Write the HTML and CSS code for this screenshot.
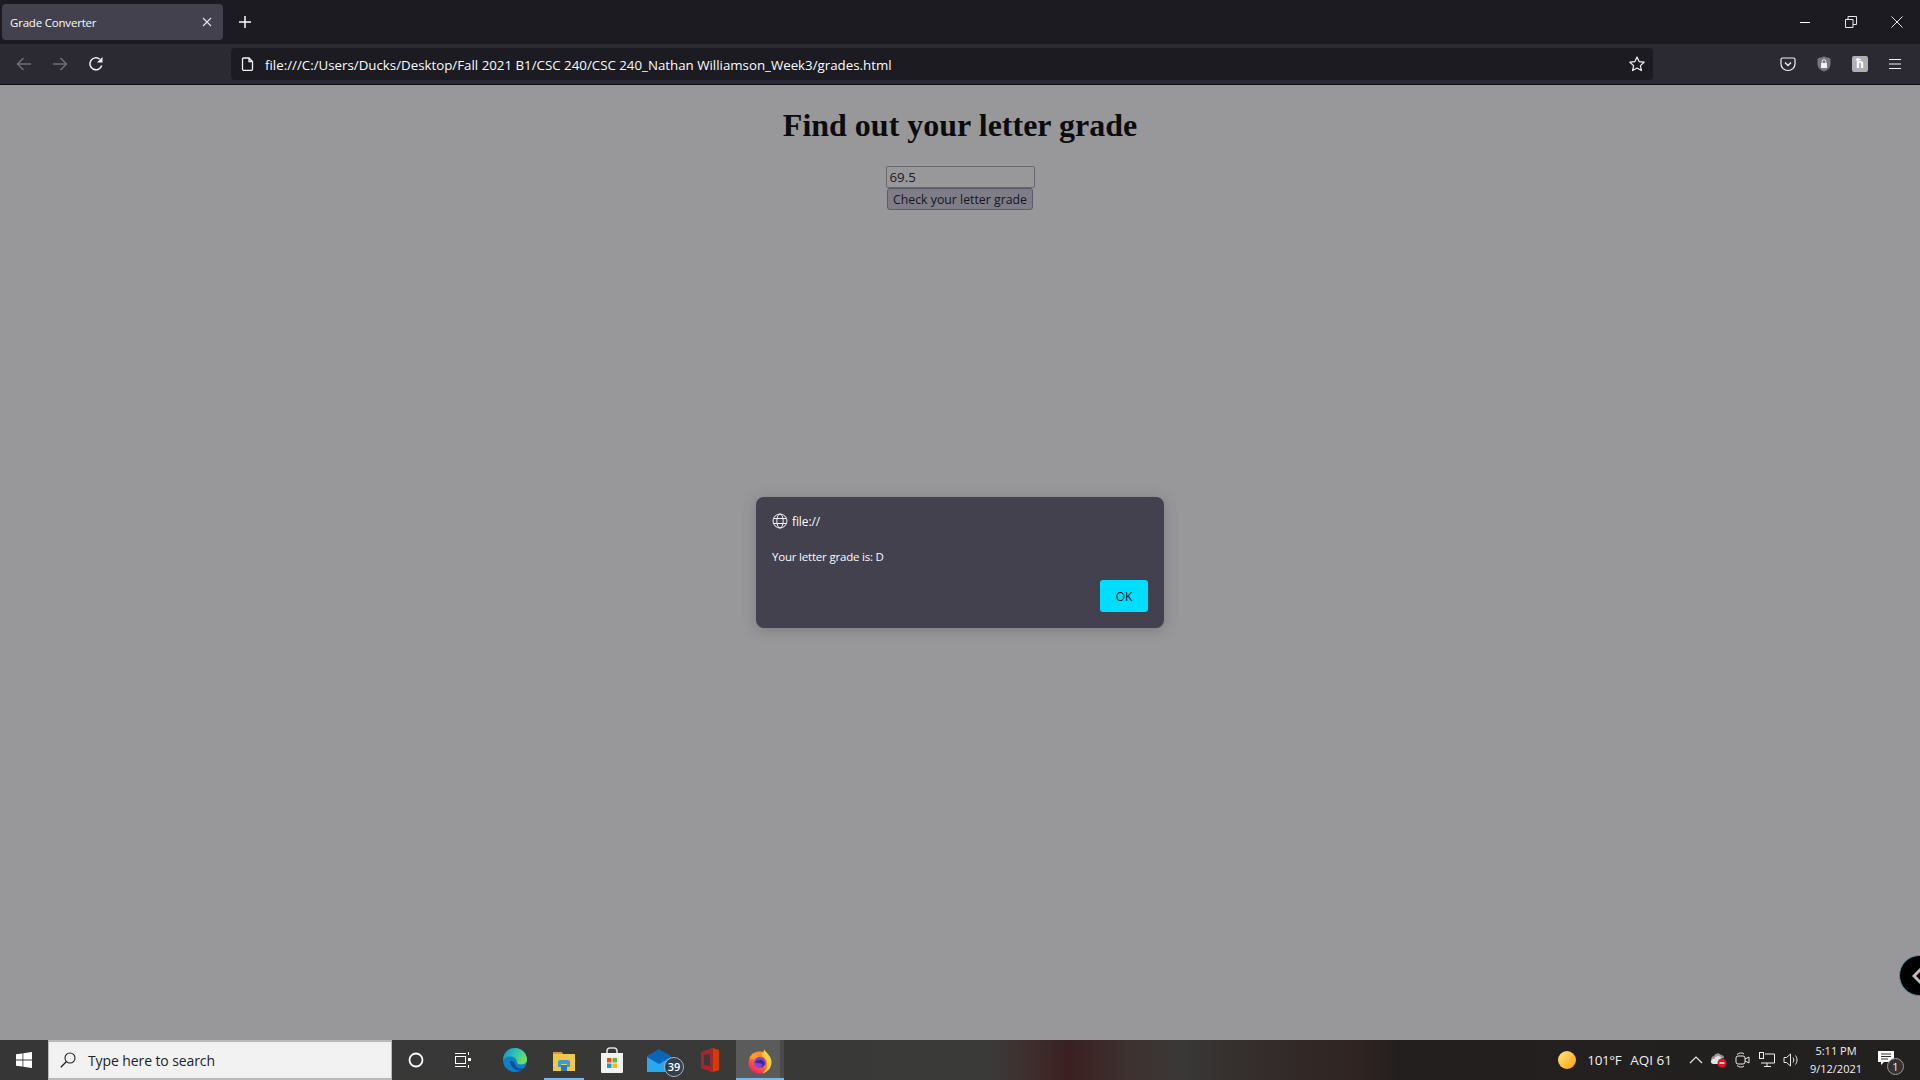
FILE: index.html
```html
<!DOCTYPE html>
<html lang="en">
<head>
<meta charset="utf-8">
<title>Grade Converter</title>
<link rel="stylesheet" href="styles.css">
</head>
<body>
<div class="app">
  <header class="tabbar">
    <div class="tab">
      <span class="tab-title">Grade Converter</span>
      <svg class="tab-close" width="10" height="10" viewBox="0 0 10 10"><path d="M1 1l8 8M9 1l-8 8" stroke="#e6e6e8" stroke-width="1.1" fill="none"/></svg>
    </div>
    <svg class="newtab" width="14" height="14" viewBox="0 0 14 14"><path d="M7 1v12M1 7h12" stroke="#fbfbfe" stroke-width="1.5" fill="none"/></svg>
    <div class="win-controls">
      <svg width="12" height="12" viewBox="0 0 12 12"><path d="M1 6.500h10" stroke="#fff" stroke-width="1"/></svg>
      <svg width="12" height="12" viewBox="0 0 12 12"><path d="M.5 3.500h7.500v8h-7.500zM3 3.500V.5h8.500v8H8" stroke="#e8e8e8" fill="none"/></svg>
      <svg width="12" height="12" viewBox="0 0 12 12"><path d="M.5.5l11 11M11.500.5l-11 11" stroke="#e8e8e8" fill="none"/></svg>
    </div>
  </header>
  <nav class="toolbar">
    <div class="nav-buttons">
      <svg width="16" height="16" viewBox="0 0 16 16"><path d="M15 8H1.500M7.500 2l-6 6 6 6" stroke="#6f6f76" stroke-width="1.500" fill="none"/></svg>
      <svg width="16" height="16" viewBox="0 0 16 16"><path d="M1 8h13.500M8.500 2l6 6-6 6" stroke="#6f6f76" stroke-width="1.500" fill="none"/></svg>
      <svg width="16" height="16" viewBox="0 0 16 16"><path d="M13.700 9.500A6 6 0 1 1 11.800 3.200" stroke="#f2f2f4" stroke-width="1.500" fill="none"/><path d="M14.500 1v5.500H9z" fill="#f2f2f4"/></svg>
    </div>
    <div class="urlbar">
      <svg class="page-icon" width="14" height="14" viewBox="0 0 14 14"><path d="M2.500 1h5.500l3.500 3.500V12a1.500 1.500 0 0 1-1.500 1.500H3a1.500 1.500 0 0 1-1.500-1.500V2A1 1 0 0 1 2.500 1zM8 1v3.500h3.500" stroke="#f2f2f4" stroke-width="1.300" fill="none"/></svg>
      <span class="url">file:///C:/Users/Ducks/Desktop/Fall 2021 B1/CSC 240/CSC 240_Nathan Williamson_Week3/grades.html</span>
      <svg width="16" height="16" viewBox="0 0 16 16"><path d="M8 1l2.100 4.600 5 .6-3.700 3.400 1 5L8 12.100 3.600 14.600l1-5L.9 6.200l5-.6z" stroke="#f2f2f4" stroke-width="1.200" stroke-linejoin="round" fill="none"/></svg>
    </div>
    <div class="toolbar-icons">
      <svg width="16" height="16" viewBox="0 0 16 16"><path d="M2.500 2h11A1.500 1.500 0 0 1 15 3.500V8a7 6.500 0 0 1-14 0V3.500A1.500 1.500 0 0 1 2.500 2z" stroke="#f2f2f4" stroke-width="1.200" fill="none"/><path d="M5 6.500l3 3 3-3" stroke="#f2f2f4" stroke-width="1.300" fill="none"/></svg>
      <svg width="16" height="16" viewBox="0 0 16 16"><path d="M8 .5l6.500 2V8c0 3.500-3 6.500-6.500 7.500C4.500 14.500 1.500 11.500 1.500 8V2.500z" fill="#77777c"/><rect x="5" y="7" width="6" height="5" rx=".5" fill="#f2f2f4"/><path d="M6.200 7V5.500a1.800 1.800 0 0 1 3.600 0V7" stroke="#f2f2f4" fill="none"/></svg>
      <div class="ext-badge">ħ</div>
      <svg width="14" height="12" viewBox="0 0 14 12"><path d="M1 1.500h12M1 6h12M1 10.500h12" stroke="#f2f2f4" stroke-width="1.200"/></svg>
    </div>
  </nav>
  <main class="page">
    <h1 class="page-title">Find out your letter grade</h1>
    <div class="grade-form">
      <input class="grade-input" type="text" value="69.5">
      <button class="grade-button" type="button">Check your letter grade</button>
    </div>
    <div class="dialog-layer">
      <div class="dialog">
        <div class="dialog-origin">
          <svg width="16" height="16" viewBox="0 0 16 16"><g stroke="#f0f0f2" stroke-width="1" fill="none"><circle cx="8" cy="8" r="7"/><ellipse cx="8" cy="8" rx="3.200" ry="7"/><path d="M1.500 5.500h13M1.500 10.500h13"/></g></svg>
          <span>file://</span>
        </div>
        <p class="dialog-message">Your letter grade is: D</p>
        <div class="dialog-actions"><button class="dialog-ok" type="button">OK</button></div>
      </div>
    </div>
    <div class="float-handle">
      <svg width="10" height="20" viewBox="0 0 10 20"><path d="M9 3L2 10l7 7" stroke="#bdbdbd" stroke-width="3" fill="none"/></svg>
    </div>
  </main>
  <footer class="taskbar">
    <div class="start">
      <svg width="16" height="16" viewBox="0 0 16 16"><path d="M0 2.300l6.500-.9v6.200H0zM7.300 1.300L16 0v7.600H7.300zM0 8.400h6.500v6.200L0 13.700zM7.300 8.400H16V16l-8.700-1.300z" fill="#fff"/></svg>
    </div>
    <div class="searchbox">
      <svg width="16" height="16" viewBox="0 0 16 16"><circle cx="10" cy="6" r="5" stroke="#222" stroke-width="1.100" fill="none"/><path d="M6.500 9.500L.8 15.200" stroke="#222" stroke-width="1.300"/></svg>
      <span>Type here to search</span>
    </div>
    <div class="task-icons">
      <div class="task-item"><svg width="16" height="16" viewBox="0 0 16 16"><circle cx="8" cy="8" r="6.500" stroke="#fff" stroke-width="1.800" fill="none"/></svg></div>
      <div class="task-item"><svg width="18" height="16" viewBox="0 0 18 16"><g stroke="#fff" fill="none"><path d="M0 1.500h11M0 14.500h11"/><rect x=".5" y="4.500" width="10" height="7"/><path d="M13.500 0v3M13.500 13v3"/></g><rect x="13" y="6" width="3" height="3" fill="#fff"/></svg></div>
      <div class="task-item app-first"><svg width="24" height="24" viewBox="0 0 24 24"><defs><linearGradient id="edgetop" x1="0" y1="0" x2="1" y2=".4"><stop offset="0" stop-color="#138ec9"/><stop offset=".55" stop-color="#2cc3b2"/><stop offset="1" stop-color="#6fe05e"/></linearGradient></defs><circle cx="12" cy="12" r="12" fill="#0f7fc8"/><path d="M12 0a12 12 0 0 1 12 12c0 3-3 4.500-6 4.500-3 0-4-1-4-2.500 0-3-3-5.500-6.500-5.500C4 8.500 1 10 .2 12.500 .2 5 5.500 0 12 0z" fill="url(#edgetop)"/><path d="M7 13c0 5 4 9 9 9.500 3 .2 5-1 6-3-3 1.500-9 1.500-10-3.500-.5-2-2-3.500-5-3z" fill="#0b4f9e"/></svg></div>
      <div class="task-item active"><svg width="22" height="20" viewBox="0 0 22 20"><path d="M0 1h8l2 2h12v17H0z" fill="#f0c84c"/><path d="M0 1h8l2 2H0z" fill="#d69e22"/><path d="M5 16v-5a2 2 0 0 1 2-2h8a2 2 0 0 1 2 2v5h-3v-3H8v3z" fill="#3f9ad8"/><rect x="8" y="14" width="6" height="6" fill="#2b7cbf"/></svg></div>
      <div class="task-item"><svg width="24" height="26" viewBox="0 0 24 26"><path d="M7 8V4a3 3 0 0 1 3-3h4a3 3 0 0 1 3 3v4" stroke="#ddd" stroke-width="1.600" fill="none"/><path d="M1 6h22v19a1 1 0 0 1-1 1H2a1 1 0 0 1-1-1z" fill="#f2f2f2"/><rect x="7" y="11" width="4.500" height="4.500" fill="#e8501f"/><rect x="12.500" y="11" width="4.500" height="4.500" fill="#6fb52c"/><rect x="7" y="16.500" width="4.500" height="4.500" fill="#0d9ee6"/><rect x="12.500" y="16.500" width="4.500" height="4.500" fill="#f8b818"/></svg></div>
      <div class="task-item"><svg class="mail-icon" width="24" height="23" viewBox="0 0 24 23"><path d="M0 7L12 0l12 7v16H0z" fill="#0a64b8"/><path d="M0 8l12 7 12-7v15H0z" fill="#2aa8ee"/></svg><span class="mail-badge">39</span></div>
      <div class="task-item"><svg class="office-icon" width="18" height="24" viewBox="0 0 18 24"><path d="M0 4.500L12 0l6 2v20l-6 2-12-4z" fill="#d83b01"/><path d="M0 4.500L12 0v24L0 20z" fill="#a4262c"/><path d="M3 7l6-1v12l-6-1z" fill="#3a3a3a"/></svg></div>
      <div class="task-item active current"><svg width="24" height="25" viewBox="0 0 24 25"><defs><linearGradient id="foxbase" x1=".9" y1="0" x2=".2" y2="1"><stop offset="0" stop-color="#ffb22e"/><stop offset=".55" stop-color="#ff6a2e"/><stop offset="1" stop-color="#f2186f"/></linearGradient></defs><circle cx="11.500" cy="13.500" r="11" fill="url(#foxbase)"/><path d="M16 0c1 3 7 6 7.500 12.500.4 6-4 11-9.500 12 5-3 6.500-9 4-14-1-2-3-2.500-4-4 1-2 2-4 2-6.500z" fill="#ffd03a"/><path d="M1.500 9C3 5.500 6 3.500 8 4c0 2 1.500 3 4 3.500-2 1-4 1.500-5.500 3-2-.5-3.500 0-5 -1.500z" fill="#ff9a2e"/><circle cx="12" cy="13.500" r="5.800" fill="#7b46d6"/><path d="M7 13c2.500-3 8-3 9.500.5.700 2.500-1.500 4.500-4 4.300 2-.6 2-2.800.3-3.300-2.300-.6-4.800 0-5.800-1.500z" fill="#3d2b96"/></svg></div>
    </div>
    <div class="tray">
      <svg class="sun" width="18" height="18" viewBox="0 0 18 18"><defs><linearGradient id="sungrad" x1="0" y1="0" x2="1" y2="1"><stop offset="0" stop-color="#ffe680"/><stop offset="1" stop-color="#ff9f0a"/></linearGradient></defs><circle cx="9" cy="9" r="9" fill="url(#sungrad)"/></svg>
      <span class="weather temp">101°F</span>
      <span class="weather aqi">AQI 61</span>
      <svg class="chevron" width="14" height="8" viewBox="0 0 14 8"><path d="M1 7l6-6 6 6" stroke="#e8e8e8" stroke-width="1.200" fill="none"/></svg>
      <svg class="tray-i" width="17" height="16" viewBox="0 0 17 16"><path d="M2 9a3 3 0 0 1 2-5 4 4 0 0 1 7-1c2 0 3 1 3 3H6c-2 0-3 2-2 5a2 2 0 0 1-2-2z" fill="#9a9a9a"/><path d="M3 12a2.500 2.500 0 0 1 1-5 4 4 0 0 1 7.500-.5L13 7l-2 5z" fill="#e4e4e4"/><circle cx="12" cy="11" r="4.500" fill="#d9182a"/><rect x="9.500" y="10.300" width="5" height="1.400" fill="#fff"/></svg>
      <svg class="tray-i" width="16" height="16" viewBox="0 0 16 16"><g stroke="#e8e8e8" fill="none"><rect x="1" y="4" width="9" height="8" rx="2"/><path d="M10 7l4-2v6l-4-2M2 2.500C4 .5 8 .5 9 2M2 13.500c2 2 6 2 7 .5"/></g></svg>
      <svg class="tray-i" width="16" height="16" viewBox="0 0 16 16"><g stroke="#f0f0f0" fill="none"><path d="M6 2h9.500v9H2M8 11v3M5 14.500h7"/><rect x=".5" y=".5" width="4" height="6" fill="#222"/></g></svg>
      <svg class="tray-i" width="16" height="16" viewBox="0 0 16 16"><g stroke="#e8e8e8" fill="none"><path d="M1 5.500h2.500L7.500 2v12l-4-3.500H1z"/><path d="M10 5.500c1 1.500 1 3.500 0 5M12.500 3.500c2 3 2 6 0 9" /></g></svg>
      <div class="clock"><span>5:11 PM</span><span>9/12/2021</span></div>
      <div class="notify">
        <svg width="16" height="15" viewBox="0 0 16 15"><path d="M0 0h16v11H6l-3 3v-3H0z" fill="#fff"/><path d="M3 3h10M3 5.500h10M3 8h7" stroke="#333"/></svg>
        <span class="notify-badge">1</span>
      </div>
    </div>
  </footer>
</div>
</body>
</html>
```
FILE: styles.css
```css
* { box-sizing: border-box; }
html, body { margin: 0; height: 100%; overflow: hidden; }
body { font-family: "Open Sans", "Noto Sans", sans-serif; }
.app { width: 1920px; height: 1080px; display: flex; flex-direction: column; }

.tabbar { height: 44px; background: #1c1b22; display: flex; align-items: center; padding-left: 2px; flex: none; }
.tab { width: 221px; height: 36px; background: #42414d; border-radius: 4px; display: flex; align-items: center; justify-content: space-between; padding: 0 11px 0 8px; }
.tab-title { font-size: 11.500px; letter-spacing: -.2px; color: #fbfbfe; }
.newtab { margin-left: 15px; }
.win-controls { margin-left: auto; display: flex; gap: 34px; padding-right: 17px; align-items: center; }

.toolbar { height: 41px; background: #2b2a33; border-bottom: 1px solid #0c0c0d; display: flex; align-items: center; flex: none; }
.nav-buttons { display: flex; gap: 20px; padding-left: 16px; width: 231px; }
.urlbar { width: 1422px; height: 32px; background: #1c1b22; border-radius: 4px; display: flex; align-items: center; padding: 0 8px 0 10px; }
.page-icon { margin-right: 10px; }
.url { font-size: 13.300px; color: #fbfbfe; flex: 1; white-space: nowrap; padding-top: 2px; }
.toolbar-icons { display: flex; align-items: center; gap: 20px; padding-left: 127px; }
.ext-badge { width: 16px; height: 16px; border-radius: 2px; background: #b0b0b3; color: #fff; font-size: 12px; line-height: 15px; text-align: center; font-weight: 700; }

.page { flex: 1; background: #98989a; position: relative; padding-top: 20px; min-height: 0; }
.page-title { margin: 0; font: bold 32px/40px "Liberation Serif", serif; color: #0c0c0e; text-align: center; }
.grade-form { display: flex; flex-direction: column; align-items: center; margin-top: 21px; }
.grade-input { width: 149px; height: 22px; margin: 0; padding: 1px 3px 1px 3px; background: #98989a; border: 1px solid #68676f; border-radius: 2px; font: 13.300px "Open Sans", sans-serif; color: #1a1a1a; outline: none; }
.grade-button { width: 146px; height: 22px; margin: 0; padding: 0; background: #7f7e88; border: 1px solid #5c5b65; border-radius: 3px; font: 12.300px "Open Sans", sans-serif; color: #16151c; }

.dialog-layer { position: absolute; inset: 0; display: grid; place-items: center; }
.dialog { width: 408px; height: 131px; background: #42414d; border-radius: 8px; box-shadow: 0 2px 14px rgba(58,57,68,.3); padding: 15px 16px 16px 16px; display: flex; flex-direction: column; color: #fbfbfe; }
.dialog-origin { display: flex; align-items: center; gap: 4px; font-size: 12px; letter-spacing: -.1px; height: 18px; }
.dialog-message { margin: 18px 0 0; font-size: 11.500px; letter-spacing: -.2px; line-height: 17px; }
.dialog-actions { margin-top: auto; display: flex; justify-content: flex-end; }
.dialog-ok { width: 48px; height: 32px; background: #00ddff; border: 0; border-radius: 3px; font: 12px "Open Sans", sans-serif; color: #15141a; padding: 0; }

.float-handle { position: absolute; left: 1899px; top: 870px; width: 41px; height: 41px; border-radius: 50%; background: #000; border: 1px solid #5a8ea0; display: flex; align-items: center; padding-left: 12px; }

.taskbar { height: 40px; flex: none; display: flex; align-items: stretch; background: linear-gradient(90deg, #363636 0, #3a3a39 990px, #3e3230 1020px, #3a2020 1070px, #3e3230 1130px, #393837 1183px, #352f2d 1240px, #2f2422 1360px, #231f1e 1400px, #222120 100%); }
.start { width: 48px; display: flex; align-items: center; justify-content: center; }
.searchbox { width: 344px; background: #f2f2f2; border: 1px solid #b9b9b9; border-bottom-width: 2px; border-top-width: 2px; display: flex; align-items: center; gap: 12px; padding-left: 11px; font-size: 14px; letter-spacing: -.1px; color: #222; }
.task-icons { display: flex; }
.task-item { width: 48px; display: flex; align-items: center; justify-content: center; position: relative; }
.task-item.app-first { margin-left: 4px; padding-right: 2px; }
.task-item.active { padding-top: 2px; }
.task-item.active::after { content: ""; position: absolute; left: 4px; right: 4px; bottom: 0; height: 2px; background: #76b9ed; }
.task-item.current { background: linear-gradient(90deg, #5b5b5b 44px, #4a4a4a 44px); margin-left: 4px; }
.task-item.current::after { left: 0; right: 0; }
.mail-icon { margin-right: 2px; }
.office-icon { margin-left: 4px; }
.mail-badge { position: absolute; left: 28px; top: 17px; width: 20px; height: 20px; border-radius: 50%; background: #2e3f50; border: 1px solid #b0b0b0; color: #fff; font-size: 11px; line-height: 18px; text-align: center; font-weight: 600; }
.tray { margin-left: auto; display: flex; align-items: center; color: #f0f0f0; padding-right: 9px; }
.sun { margin-right: 11px; }
.weather { font-size: 13.500px; }
.temp { letter-spacing: -.4px; }
.aqi { margin-left: 9px; margin-right: 17px; }
.chevron { margin-right: 7px; }
.tray-i { margin-right: 8px; }
.clock { display: flex; flex-direction: column; align-items: center; font-size: 11px; line-height: 18px; width: 62px; margin-left: -2px; }
.notify { width: 44px; height: 100%; position: relative; display: flex; align-items: center; justify-content: center; padding-right: 6px; padding-bottom: 3px; }
.notify-badge { position: absolute; left: 20px; top: 18px; width: 17px; height: 17px; border-radius: 50%; background: #333; border: 1px solid #999; font-size: 11px; line-height: 15px; text-align: center; color: #eee; }
```
